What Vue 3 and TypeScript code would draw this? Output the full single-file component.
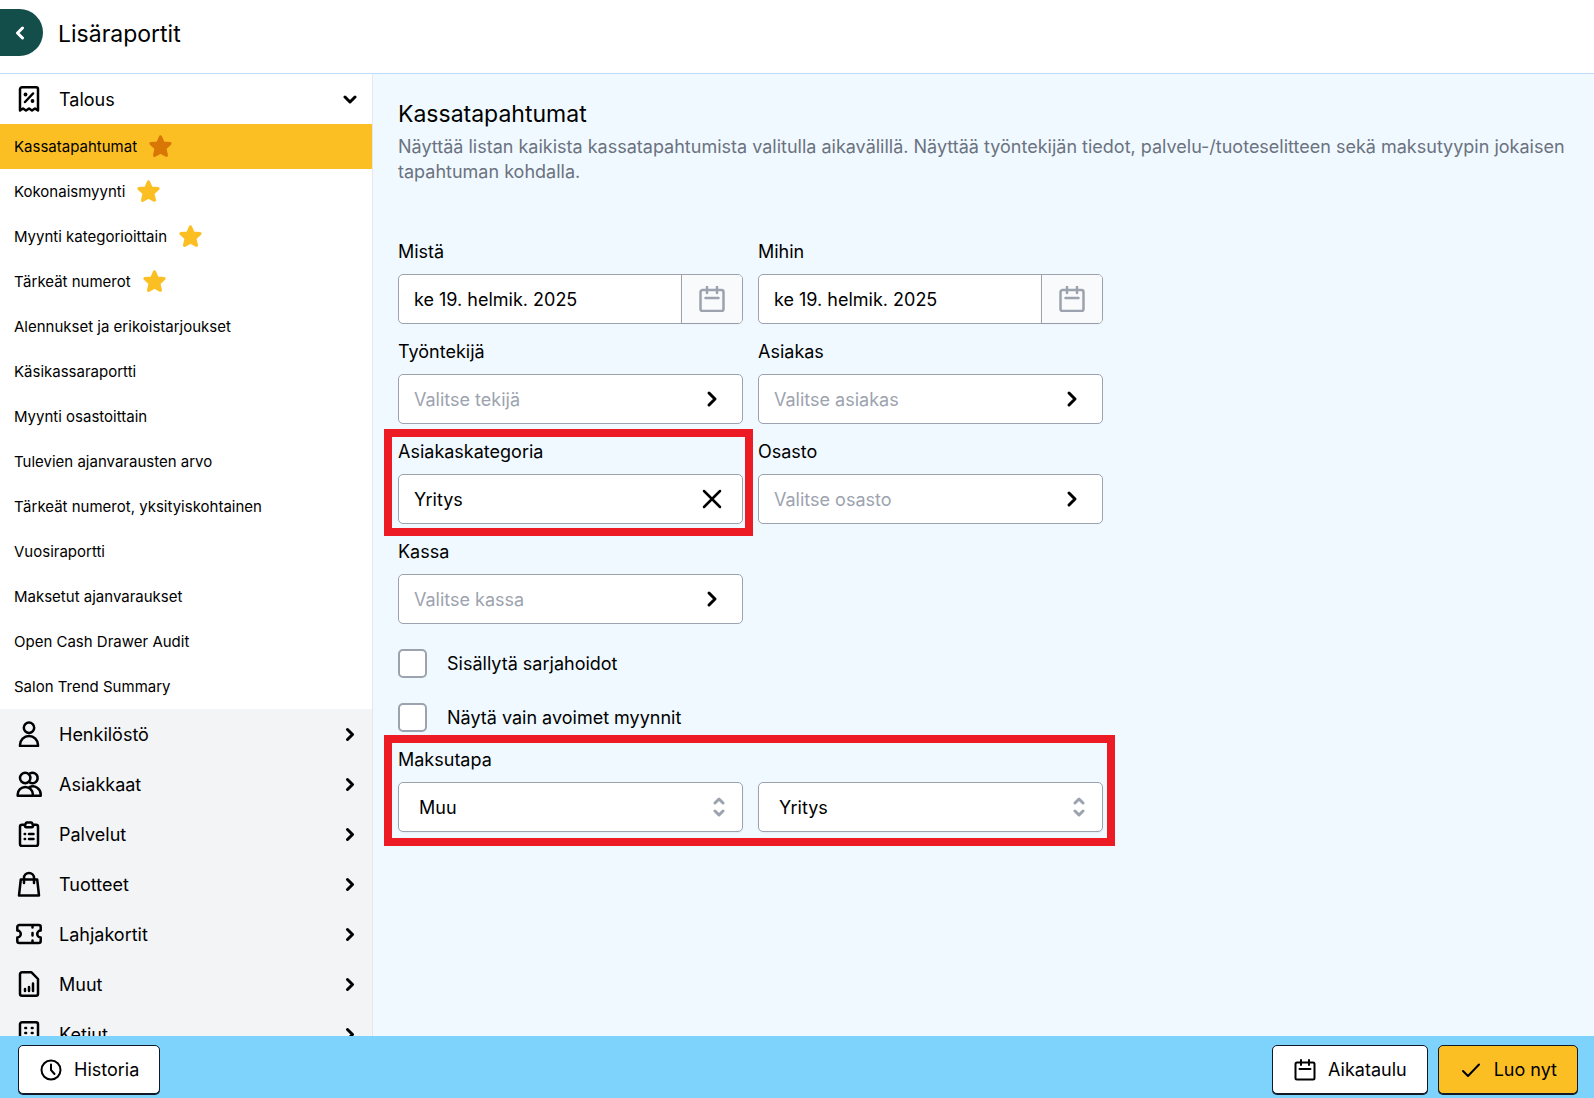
<script setup lang="ts">
import { ref } from 'vue'

interface Report {
  name: string
  starred?: boolean
}

interface Category {
  name: string
  icon: string
}

const reports: Report[] = [
  { name: 'Kassatapahtumat', starred: true },
  { name: 'Kokonaismyynti', starred: true },
  { name: 'Myynti kategorioittain', starred: true },
  { name: 'Tärkeät numerot', starred: true },
  { name: 'Alennukset ja erikoistarjoukset' },
  { name: 'Käsikassaraportti' },
  { name: 'Myynti osastoittain' },
  { name: 'Tulevien ajanvarausten arvo' },
  { name: 'Tärkeät numerot, yksityiskohtainen' },
  { name: 'Vuosiraportti' },
  { name: 'Maksetut ajanvaraukset' },
  { name: 'Open Cash Drawer Audit' },
  { name: 'Salon Trend Summary' },
]

const categories: Category[] = [
  {
    name: 'Henkilöstö',
    icon: 'M13 1.5a5.2 5.2 0 1 0 0 10.4a5.2 5.2 0 1 0 0-10.4zM4 25v-1a9 9 0 0 1 18 0v1z',
  },
  {
    name: 'Asiakkaat',
    icon: 'M9.2 1.8a5.2 5.2 0 1 0 0 10.4a5.2 5.2 0 1 0 0-10.4zM14 2.4a5.2 5.2 0 1 1 0 9.2M1.7 24.7v-1.2a7.6 7.6 0 0 1 15.2 0v1.2zM13.5 16.2a7.8 7.8 0 0 1 11.2 7.3v1.2h-7.8',
  },
  {
    name: 'Palvelut',
    icon: 'M9 3.8H6a2 2 0 0 0-2 2V23a2 2 0 0 0 2 2h14a2 2 0 0 0 2-2V5.8a2 2 0 0 0-2-2h-3M10.8 1.5h4.4a1 1 0 0 1 1 .7l.8 2.3a1.3 1.3 0 0 1-1.3 1.7h-5.4a1.3 1.3 0 0 1-1.3-1.7l.8-2.3a1 1 0 0 1 1-.7zM8.7 13h.4M13 13h4.5M8.700 18h.4M13 18h4.5',
  },
  {
    name: 'Tuotteet',
    icon: 'M4.8 8.500h16.400L23 24.5H3zM8 12V7a5 5 0 0 1 10 0v5',
  },
  {
    name: 'Lahjakortit',
    icon: 'M3.3 4h19.400a2 2 0 0 1 2 2v3.500a3.500 3.500 0 0 0 0 7V20a2 2 0 0 1-2 2H3.300a2 2 0 0 1-2-2v-3.500a3.500 3.500 0 0 0 0-7V6a2 2 0 0 1 2-2zM16.500 4.500v2M16.500 12v2.500M16.500 19.500v2',
  },
  {
    name: 'Muut',
    icon: 'M6 1.300h9.500L22 8v14.700a2 2 0 0 1-2 2H6a2 2 0 0 1-2-2V3.300a2 2 0 0 1 2-2zM9 20v-2M13 20v-4M17 20v-7.500',
  },
  {
    name: 'Ketjut',
    icon: 'M6 1.300h14a2 2 0 0 1 2 2V25H4V3.300a2 2 0 0 1 2-2zM9.300 7h.8M15.800 7h.8M9.300 12h.8M15.800 12h.8M9.300 17h.8M15.800 17h.8',
  },
]

const activeReport = ref('Kassatapahtumat')
const fromDate = ref('ke 19. helmik. 2025')
const toDate = ref('ke 19. helmik. 2025')
const employee = ref('')
const customer = ref('')
const customerCategory = ref('Yritys')
const department = ref('')
const register = ref('')
const includeSeries = ref(false)
const openSalesOnly = ref(false)
const paymentMethod = ref('Muu')
const paymentSubtype = ref('Yritys')
</script>

<template>
  <div class="app">
    <header class="topbar">
      <button class="back" type="button" aria-label="Takaisin">
        <svg width="10" height="14" viewBox="0 0 10 14"><path d="M7.500 2L2.500 7l5 5" /></svg>
      </button>
      <h1>Lisäraportit</h1>
    </header>

    <div class="body">
      <nav class="sidebar" aria-label="Raportit">
        <button class="category open" type="button" aria-expanded="true">
          <svg class="cat-icon" viewBox="0 0 26 26">
            <path d="M4 24.500V3.300a2 2 0 0 1 2-2h14a2 2 0 0 1 2 2v21.200l-3-2-3 2-3-2-3 2-3-2zM9 16l8-8.500" />
            <circle class="dot" cx="9.500" cy="8.500" r="1.900" />
            <circle class="dot" cx="16.500" cy="15" r="1.900" />
          </svg>
          <span>Talous</span>
          <svg class="chevron" viewBox="0 0 14 14"><path d="M2 5l5 5 5-5" /></svg>
        </button>
        <ul class="reports">
          <li v-for="report in reports" :key="report.name">
            <a
              href="#"
              :class="{ active: report.name === activeReport }"
              @click.prevent="activeReport = report.name"
            >
              <span>{{ report.name }}</span>
              <svg v-if="report.starred" class="star" viewBox="0 0 22 22">
                <path d="M11 1.800l2.600 5.900 6.500.6-4.900 4.500 1.500 6.600-5.700-3.100-5.700 3.100 1.500-6.600-4.900-4.500 6.500-.6z" />
              </svg>
            </a>
          </li>
        </ul>
        <button v-for="category in categories" :key="category.name" class="category" type="button">
          <svg class="cat-icon" viewBox="0 0 26 26"><path :d="category.icon" /></svg>
          <span>{{ category.name }}</span>
          <svg class="chevron" viewBox="0 0 14 14"><path d="M4.500 2.500l5 5-5 5" /></svg>
        </button>
      </nav>

      <main class="content">
        <h2>Kassatapahtumat</h2>
        <p class="description">
          Näyttää listan kaikista kassatapahtumista valitulla aikavälillä. Näyttää työntekijän
          tiedot, palvelu-/tuoteselitteen sekä maksutyypin jokaisen tapahtuman kohdalla.
        </p>

        <form class="form" @submit.prevent>
          <div class="field">
            <label for="from">Mistä</label>
            <div class="control">
              <input id="from" v-model="fromDate" type="text" />
              <button class="date-button" type="button" aria-label="Valitse alkupäivä">
                <svg viewBox="0 0 26 26"><path d="M3.500 4h19a2 2 0 0 1 2 2v17a2 2 0 0 1-2 2h-19a2 2 0 0 1-2-2V6a2 2 0 0 1 2-2zM8 1v6M18 1v6M6.500 12h13" /></svg>
              </button>
            </div>
          </div>
          <div class="field">
            <label for="to">Mihin</label>
            <div class="control">
              <input id="to" v-model="toDate" type="text" />
              <button class="date-button" type="button" aria-label="Valitse loppupäivä">
                <svg viewBox="0 0 26 26"><path d="M3.500 4h19a2 2 0 0 1 2 2v17a2 2 0 0 1-2 2h-19a2 2 0 0 1-2-2V6a2 2 0 0 1 2-2zM8 1v6M18 1v6M6.500 12h13" /></svg>
              </button>
            </div>
          </div>
          <div class="field">
            <label for="employee">Työntekijä</label>
            <div class="control">
              <input id="employee" v-model="employee" type="text" placeholder="Valitse tekijä" />
              <button class="pick-button" type="button" aria-label="Avaa tekijät">
                <svg viewBox="0 0 26 26"><path d="M10 7l6 6-6 6" /></svg>
              </button>
            </div>
          </div>
          <div class="field">
            <label for="customer">Asiakas</label>
            <div class="control">
              <input id="customer" v-model="customer" type="text" placeholder="Valitse asiakas" />
              <button class="pick-button" type="button" aria-label="Avaa asiakkaat">
                <svg viewBox="0 0 26 26"><path d="M10 7l6 6-6 6" /></svg>
              </button>
            </div>
          </div>
          <div class="field marked">
            <label for="category">Asiakaskategoria</label>
            <div class="control">
              <input id="category" v-model="customerCategory" type="text" />
              <button class="pick-button clear" type="button" aria-label="Tyhjennä" @click="customerCategory = ''">
                <svg viewBox="0 0 26 26"><path d="M5 5l16 16M21 5L5 21" /></svg>
              </button>
            </div>
          </div>
          <div class="field">
            <label for="department">Osasto</label>
            <div class="control">
              <input id="department" v-model="department" type="text" placeholder="Valitse osasto" />
              <button class="pick-button" type="button" aria-label="Avaa osastot">
                <svg viewBox="0 0 26 26"><path d="M10 7l6 6-6 6" /></svg>
              </button>
            </div>
          </div>
          <div class="field">
            <label for="register">Kassa</label>
            <div class="control">
              <input id="register" v-model="register" type="text" placeholder="Valitse kassa" />
              <button class="pick-button" type="button" aria-label="Avaa kassat">
                <svg viewBox="0 0 26 26"><path d="M10 7l6 6-6 6" /></svg>
              </button>
            </div>
          </div>

          <div class="checks">
            <label class="check"><input v-model="includeSeries" type="checkbox" />Sisällytä sarjahoidot</label>
            <label class="check"><input v-model="openSalesOnly" type="checkbox" />Näytä vain avoimet myynnit</label>
          </div>

          <div class="payment marked">
            <label for="payment">Maksutapa</label>
            <div class="selects">
              <div class="control">
                <select id="payment" v-model="paymentMethod">
                  <option>Muu</option>
                </select>
                <svg class="updown" viewBox="0 0 12 20"><path d="M2 6l4-4 4 4M2 14l4 4 4-4" /></svg>
              </div>
              <div class="control">
                <select v-model="paymentSubtype" aria-label="Maksutavan tarkenne">
                  <option>Yritys</option>
                </select>
                <svg class="updown" viewBox="0 0 12 20"><path d="M2 6l4-4 4 4M2 14l4 4 4-4" /></svg>
              </div>
            </div>
          </div>
        </form>
      </main>
    </div>

    <footer class="actions">
      <button class="action" type="button">
        <svg viewBox="0 0 22 22"><circle cx="11" cy="11" r="9.500" /><path d="M11 5.500V11l3.500 4" /></svg>
        Historia
      </button>
      <button class="action push" type="button">
        <svg viewBox="0 0 22 22"><path d="M3 3.500h16a1.500 1.500 0 0 1 1.500 1.500v14a1.500 1.500 0 0 1-1.500 1.500H3A1.500 1.500 0 0 1 1.500 19V5A1.500 1.500 0 0 1 3 3.500zM7 1v5M15 1v5M5.500 10h11" /></svg>
        Aikataulu
      </button>
      <button class="action primary" type="button">
        <svg viewBox="0 0 22 22"><path d="M3 12l5 5L19 5.500" /></svg>
        Luo nyt
      </button>
    </footer>
  </div>
</template>

<style>
body {
  margin: 0;
}
</style>

<style scoped>
.app {
  display: flex;
  flex-direction: column;
  height: 100vh;
  overflow: hidden;
  font-family: Inter, sans-serif;
  font-optical-sizing: none;
  font-size: 18px;
  line-height: 25px;
  color: #000;
  background: #fff;
}

.app * {
  box-sizing: border-box;
}

button,
input,
select {
  margin: 0;
  padding: 0;
  border: 0;
  font: inherit;
  color: inherit;
  background: none;
}

svg {
  flex: none;
  fill: none;
  stroke: currentColor;
  stroke-width: 2;
  stroke-linecap: round;
  stroke-linejoin: round;
}

h1,
h2 {
  margin: 0;
  font-size: 23px;
  font-weight: 400;
  line-height: 32px;
}

.topbar {
  flex: none;
  display: flex;
  align-items: center;
  gap: 15px;
  padding: 9px 0 17px;
  border-bottom: 1px solid #bfdbfe;
}

.topbar h1 {
  padding-top: 2px;
}

.back {
  display: flex;
  align-items: center;
  width: 43px;
  height: 47px;
  padding-left: 15px;
  border-radius: 0 24px 24px 0;
  color: #fff;
  background: #134e4a;
}

.back svg {
  stroke-width: 3;
}

.body {
  flex: 1;
  display: flex;
  min-height: 0;
}

.sidebar {
  flex: none;
  width: 373px;
  border-right: 1px solid #e5e7eb;
  overflow-y: auto;
  scrollbar-width: none;
  background: #f3f4f6;
}

.category {
  display: flex;
  align-items: center;
  width: 100%;
  height: 50px;
  padding: 0 15px 0 16px;
  gap: 17px;
  text-align: left;
}

.category.open {
  background: #fff;
}

.category span {
  flex: 1;
}

.cat-icon {
  width: 26px;
  height: 26px;
  stroke-width: 2.5;
}

.cat-icon .dot {
  fill: currentColor;
  stroke: none;
}

.chevron {
  width: 14px;
  height: 14px;
  stroke-width: 3;
}

.reports {
  margin: 0;
  padding: 0;
  list-style: none;
  background: #fff;
}

.reports a {
  display: flex;
  align-items: center;
  gap: 12px;
  height: 45px;
  padding: 0 14px;
  font-size: 15px;
  color: inherit;
  text-decoration: none;
}

.reports a.active {
  background: #fbbf24;
}

.star {
  width: 23px;
  height: 23px;
  color: #fbbf24;
  fill: currentColor;
  stroke-width: 3;
}

.active .star {
  color: #d97706;
}

.content {
  flex: 1;
  min-width: 0;
  padding: 24px 25px;
  overflow-y: auto;
  scrollbar-width: none;
  background: #f0f9ff;
}

.description {
  margin: 4px 0 55px;
  color: #6b7280;
}

.form {
  display: grid;
  grid-template-columns: repeat(2, 345px);
  gap: 15px;
}

.field,
.payment {
  display: flex;
  flex-direction: column;
  gap: 10px;
}

.marked {
  position: relative;
}

.marked::after {
  content: '';
  position: absolute;
  inset: -10px -10px -12px -14px;
  border: 8px solid #ed1c24;
  pointer-events: none;
}

.payment.marked::after {
  inset: -12px -12px -14px -14px;
}

.control {
  position: relative;
  display: flex;
  height: 50px;
  border: 1px solid #9ca3af;
  border-radius: 5px;
  background: #fff;
}

.control input {
  flex: 1;
  min-width: 0;
  padding-left: 15px;
}

.control input::placeholder {
  color: #9ca3af;
  opacity: 1;
}

.date-button,
.pick-button {
  display: flex;
  align-items: center;
  justify-content: center;
  width: 61px;
}

.date-button {
  border-left: 1px solid #9ca3af;
  border-radius: 0 4px 4px 0;
  color: #9ca3af;
  background: #f9fafb;
  box-shadow: 0 1px 2px rgba(0, 0, 0, 0.05);
}

.date-button svg,
.pick-button svg {
  width: 26px;
  height: 26px;
}

.date-button svg {
  stroke-width: 2.5;
}

.pick-button svg {
  stroke-width: 3;
}

.pick-button.clear svg {
  stroke-width: 2.5;
}

.checks,
.payment {
  grid-column: 1 / -1;
}

.checks {
  display: flex;
  flex-direction: column;
  gap: 25px;
  padding-top: 10px;
}

.check {
  display: flex;
  align-items: center;
  gap: 20px;
}

.check input {
  appearance: none;
  width: 29px;
  height: 29px;
  border: 2px solid #9ca3af;
  border-radius: 5px;
  background: #fff;
}

.selects {
  display: grid;
  grid-template-columns: repeat(2, 1fr);
  gap: 15px;
}

.selects .control {
  box-shadow: 0 1px 2px rgba(0, 0, 0, 0.05);
}

.control select {
  appearance: none;
  width: 100%;
  padding: 0 40px 0 20px;
}

.updown {
  position: absolute;
  top: 14px;
  right: 17px;
  width: 12px;
  height: 20px;
  color: #9ca3af;
  pointer-events: none;
  stroke-width: 3;
}

.actions {
  flex: none;
  display: flex;
  gap: 10px;
  padding: 9px 16px 4px 18px;
  background: #7dd3fc;
}

.action {
  display: flex;
  align-items: center;
  gap: 12px;
  height: 49px;
  padding: 0 20px 0 21px;
  border: 1px solid #111827;
  border-radius: 5px;
  background: #fff;
  box-shadow: 0 1px 0 #111827;
}

.action svg {
  width: 22px;
  height: 22px;
}

.push {
  margin-left: auto;
}

.primary {
  background: #fbbf24;
}
</style>
